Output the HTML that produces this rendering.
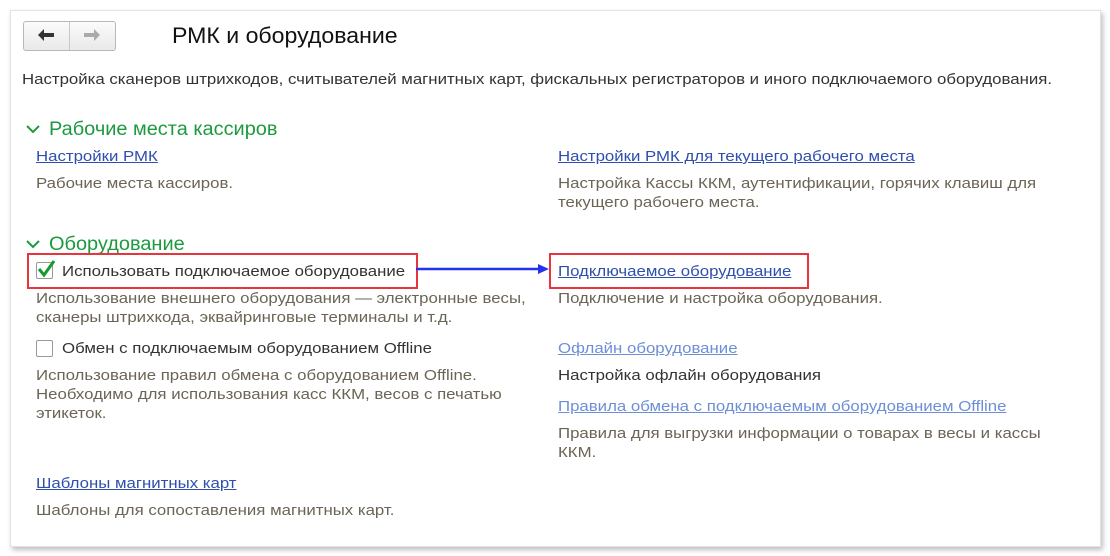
<!DOCTYPE html>
<html><head><meta charset="utf-8"><style>
body{margin:0;width:1110px;height:556px;background:#fff;font-family:"Liberation Sans",sans-serif;position:relative;overflow:hidden}
.card{position:absolute;left:10px;top:10px;width:1089px;height:535px;background:#fff;border:1px solid #e2e2e2;box-shadow:2px 3px 5px rgba(0,0,0,.25)}
.a{position:absolute;white-space:nowrap;font-size:15px;line-height:19px;transform:scaleX(1.12);transform-origin:0 0}
.d{color:#6b6555}
.t{color:#333}
.l{color:#2f4fae;text-decoration:underline}
.ll{color:#6c8fd6;text-decoration:underline}
.g{color:#1d9a3e;font-size:19px;transform:scaleX(1.05)}
.box{position:absolute;border:2px solid #e8343c}
.cb{position:absolute;width:15px;height:15px;border:1px solid #999;border-radius:2px;background:#fff}
</style></head><body>
<div class="card"></div>
<div style="position:absolute;left:23px;top:21px;width:91px;height:28px;border:1px solid #b8b8b8;border-radius:3px;background:linear-gradient(#fbfbfb,#e9e9e9)"></div>
<div style="position:absolute;left:69px;top:22px;width:1px;height:28px;background:#c8c8c8"></div>
<svg style="position:absolute;left:37px;top:28px" width="18" height="14"><path d="M1 7 L7 1 L7 5 L17 5 L17 9 L7 9 L7 13Z" fill="#333"/></svg>
<svg style="position:absolute;left:83px;top:28px" width="18" height="14"><path d="M17 7 L11 1 L11 5 L1 5 L1 9 L11 9 L11 13Z" fill="#aaa"/></svg>
<div class="a" style="left:172px;top:22px;font-size:22px;line-height:28px;color:#111;transform:scaleX(1.05)">РМК и оборудование</div>
<div class="a t" style="left:22px;top:70px">Настройка сканеров штрихкодов, считывателей магнитных карт, фискальных регистраторов и иного подключаемого оборудования.</div>
<svg style="position:absolute;left:26px;top:124px" width="14" height="10"><polyline points="1,2 7,8 13,2" stroke="#1d9a3e" stroke-width="2" fill="none"/></svg>
<div class="a g" style="left:49px;top:120px">Рабочие места кассиров</div>
<div class="a l" style="left:36px;top:147px">Настройки РМК</div>
<div class="a d" style="left:36px;top:174px">Рабочие места кассиров.</div>
<div class="a l" style="left:558px;top:147px">Настройки РМК для текущего рабочего места</div>
<div class="a d" style="left:558px;top:174px">Настройка Кассы ККМ, аутентификации, горячих клавиш для<br>текущего рабочего места.</div>
<svg style="position:absolute;left:26px;top:239px" width="14" height="10"><polyline points="1,2 7,8 13,2" stroke="#1d9a3e" stroke-width="2" fill="none"/></svg>
<div class="a g" style="left:49px;top:235px">Оборудование</div>
<div class="box" style="left:27px;top:253px;width:387px;height:32px"></div>
<div class="cb" style="left:36px;top:262px"></div>
<svg style="position:absolute;left:36px;top:259px" width="20" height="20"><path d="M3 10 L8 16 L18 2" stroke="#169a2f" stroke-width="3" fill="none"/></svg>
<div class="a t" style="left:62px;top:262px">Использовать подключаемое оборудование</div>
<svg style="position:absolute;left:416px;top:262px" width="135" height="14"><line x1="0" y1="7" x2="125" y2="7" stroke="#2233ee" stroke-width="2.5"/><path d="M122 2 L133 7 L122 12Z" fill="#2233ee"/></svg>
<div class="box" style="left:549px;top:253px;width:256px;height:32px"></div>
<div class="a l" style="left:558px;top:262px">Подключаемое оборудование</div>
<div class="a d" style="left:36px;top:289px">Использование внешнего оборудования — электронные весы,<br>сканеры штрихкода, эквайринговые терминалы и т.д.</div>
<div class="a d" style="left:558px;top:289px">Подключение и настройка оборудования.</div>
<div class="cb" style="left:36px;top:340px"></div>
<div class="a t" style="left:62px;top:339px">Обмен с подключаемым оборудованием Offline</div>
<div class="a d" style="left:36px;top:366px">Использование правил обмена с оборудованием Offline.<br>Необходимо для использования касс ККМ, весов с печатью<br>этикеток.</div>
<div class="a ll" style="left:558px;top:339px">Офлайн оборудование</div>
<div class="a t" style="left:558px;top:366px">Настройка офлайн оборудования</div>
<div class="a ll" style="left:558px;top:397px">Правила обмена с подключаемым оборудованием Offline</div>
<div class="a d" style="left:558px;top:424px">Правила для выгрузки информации о товарах в весы и кассы<br>ККМ.</div>
<div class="a l" style="left:36px;top:474px">Шаблоны магнитных карт</div>
<div class="a d" style="left:36px;top:501px">Шаблоны для сопоставления магнитных карт.</div>
</body></html>
